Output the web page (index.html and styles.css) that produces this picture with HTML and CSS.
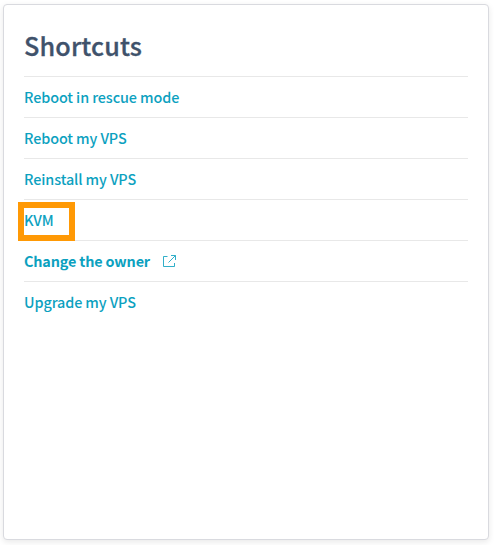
FILE: index.html
```html
<!DOCTYPE html>
<html lang="en">
<head>
<meta charset="utf-8">
<title>Shortcuts</title>
<link rel="stylesheet" href="styles.css">
</head>
<body>
<section class="card">
  <h2 class="title">Shortcuts</h2>
  <ul class="links">
    <li class="item"><a class="link">Reboot in rescue mode</a></li>
    <li class="item"><a class="link">Reboot my VPS</a></li>
    <li class="item"><a class="link">Reinstall my VPS</a></li>
    <li class="item highlighted"><a class="link">KVM</a></li>
    <li class="item"><a class="link strong">Change the owner</a>
      <svg class="external" viewBox="0 0 13 13" width="13" height="13" fill="none" stroke="currentColor">
        <path d="M4.500 1.500H.5v10h11V8M8 .5h4.500v4.500M12.300.7 5.500 7.500" stroke-width=".85"/>
      </svg>
    </li>
    <li class="item"><a class="link">Upgrade my VPS</a></li>
  </ul>
</section>
</body>
</html>
```
FILE: styles.css
```css
*, *::after { box-sizing: border-box; }
body {
  margin: 0;
  padding: 4px 5px 5px 3px;
  height: 545px;
  overflow: hidden;
  background: #fff;
  font-family: "Noto Sans CJK SC", "Open Sans", sans-serif;
}
.card {
  height: 536px;
  padding: 20px;
  border: 1px solid #d9dadf;
  border-radius: 4px;
  box-shadow: 0 2px 6px rgba(0, 0, 0, .09);
  background: #fff;
}
.title {
  margin: 0;
  height: 51px;
  line-height: 40px;
  font-size: 25.2px;
  font-weight: 500;
  letter-spacing: .15px;
  -webkit-text-stroke: .3px currentColor;
  color: #3f526b;
}
.links { margin: 0; padding: 0; list-style: none; }
.item {
  position: relative;
  display: flex;
  align-items: center;
  height: 41px;
  border-top: 1px solid #e8e8e8;
  font-size: 14.4px;
  font-weight: 500;
  letter-spacing: -.1px;
  color: #0ca1bf;
}
.link { line-height: 24px; }
.strong { font-weight: 700; letter-spacing: -.15px; }
.external { margin-left: 13px; }
.highlighted::after {
  content: "";
  position: absolute;
  z-index: 1;
  left: -6px;
  top: 2px;
  width: 57px;
  height: 39px;
  border: 6px solid #ff9905;
}
```
